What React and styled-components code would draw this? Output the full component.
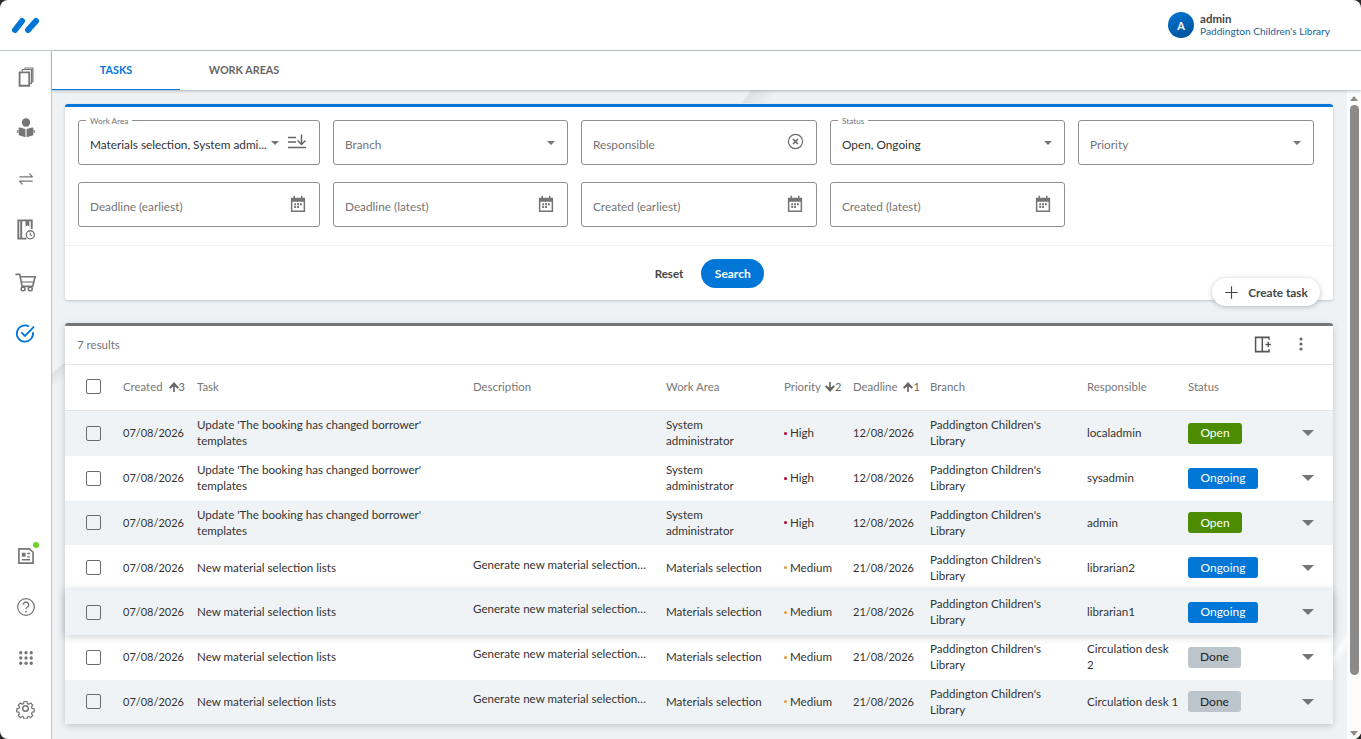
import React from 'react';
import styled, { createGlobalStyle } from 'styled-components';

const Global = createGlobalStyle`
  html, body { margin: 0; padding: 0; background: #2a2a2a; }
  body { font-family: "Lato", "Liberation Sans", sans-serif; font-size: 12px; color: #333; }
  * { box-sizing: border-box; }
  svg { flex: none; }
`;

const Page = styled.div`
  width: 1361px;
  height: 739px;
  background: #fff;
  border-radius: 8px;
  overflow: hidden;
  display: flex;
  flex-direction: column;
`;
const Header = styled.header`
  height: 51px;
  flex: none;
  display: flex;
  align-items: center;
  justify-content: space-between;
  padding: 0 31px 0 12px;
  border-bottom: 1px solid #bcc4cc;
`;
const User = styled.div`
  display: flex;
  align-items: center;
  gap: 6px;
`;
const Avatar = styled.div`
  width: 26px;
  height: 26px;
  border-radius: 50%;
  background: linear-gradient(160deg, #0076d6, #004f94);
  color: #fff;
  font-weight: 700;
  font-size: 11px;
  display: flex;
  align-items: center;
  justify-content: center;
`;
const UserName = styled.div`
  font-size: 11.5px;
  font-weight: 700;
  line-height: 12px;
  color: #444;
`;
const UserOrg = styled.div`
  font-size: 10.1px;
  line-height: 12px;
  color: #1c5f99;
`;
const Body = styled.div`
  flex: 1;
  display: flex;
  min-height: 0;
`;
const Sidebar = styled.nav`
  width: 52px;
  flex: none;
  border-right: 1px solid #bcc4cc;
  display: flex;
  flex-direction: column;
  justify-content: space-between;
  padding-bottom: 5px;
`;
const SideGroup = styled.div`
  display: flex;
  flex-direction: column;
`;
const SideItem = styled.div`
  position: relative;
  height: 51px;
  display: flex;
  align-items: center;
  justify-content: center;
  padding-top: ${p => p.$nudge || 0}px;
  color: ${p => (p.$active ? '#0076d6' : '#757575')};
`;
const Dot = styled.span`
  position: absolute;
  top: 12px;
  right: 12px;
  width: 6px;
  height: 6px;
  border-radius: 50%;
  background: #6fd420;
`;
const Main = styled.main`
  flex: 1;
  min-width: 0;
  display: flex;
  flex-direction: column;
`;
const Tabs = styled.div`
  height: 39px;
  flex: none;
  display: flex;
  background: #fff;
  box-shadow: 0 1px 3px rgba(60, 70, 80, 0.35);
  position: relative;
  z-index: 2;
`;
const Tab = styled.div`
  width: 128px;
  display: flex;
  align-items: center;
  justify-content: center;
  font-size: 10.8px;
  font-weight: 700;
  padding-bottom: 1px;
  color: ${p => (p.$active ? '#0076d6' : '#666')};
  border-bottom: 1px solid ${p => (p.$active ? '#0076d6' : 'transparent')};
`;
// the faint diagonal streaks of the page background, showing in the gaps around the panels
const ScrollArea = styled.div`
  flex: 1;
  min-height: 0;
  display: flex;
  background-color: #eff2f5;
  background-repeat: no-repeat;
  background-image:
    linear-gradient(125deg, transparent 30%, #dfe2e5 36%, transparent 90%),
    linear-gradient(140deg, transparent 42%, #dfe2e5 48%, transparent 85%),
    linear-gradient(125deg, transparent 35%, #fbfcfd 50%, transparent 70%);
  background-size: 40px 13px, 13px 30px, 14px 40px;
  background-position: 683px 0, 0 265px, 1281px 540px;
`;
const Content = styled.div`
  flex: 1;
  min-width: 0;
  padding: 14px 14px 0 13px;
  display: flex;
  flex-direction: column;
  gap: 23px;
`;
const Scrollbar = styled.div`
  width: 14px;
  flex: none;
  background: #fcfcfc;
  display: flex;
  flex-direction: column;
  align-items: center;
  justify-content: space-between;
  padding: 6px 0 3px;
`;
const ScrollThumb = styled.div`
  width: 9px;
  height: 570px;
  margin-top: 4px;
  border-radius: 5px;
  background: #8b8b8b;
`;
const ScrollSpacer = styled.div`
  flex: 1;
`;
const ScrollArrow = styled.div`
  width: 0;
  height: 0;
  border-left: 4px solid transparent;
  border-right: 4px solid transparent;
  ${p => (p.$down ? 'border-top: 5px solid #8b8b8b;' : 'border-bottom: 5px solid #8b8b8b;')}
`;
const SearchPanel = styled.section`
  position: relative;
  height: 196px;
  flex: none;
  background: #fff;
  border-top: 3px solid #0076d6;
  border-radius: 3px;
  box-shadow: 0 1px 3px rgba(60, 70, 80, 0.25);
`;
const FilterGrid = styled.div`
  display: grid;
  grid-template-columns: 242px 235px 236px 235px 236px;
  grid-auto-rows: 45px;
  gap: 17px 13px;
  padding: 13px 13px 18px;
  border-bottom: 1px solid #eff1f3;
`;
const Field = styled.div`
  position: relative;
  border: 1px solid #8f8f8f;
  border-radius: 3px;
  display: flex;
  align-items: center;
  padding: 0 12px 0 11px;
  gap: 8px;
`;
const Legend = styled.span`
  position: absolute;
  top: -5px;
  left: 7px;
  padding: 0 4px;
  background: #fff;
  font-size: 8.2px;
  line-height: 10px;
  color: #757575;
`;
const FieldText = styled.span`
  flex: 1;
  min-width: 0;
  padding-top: 3px;
  font-size: 11.8px;
  white-space: nowrap;
  color: ${p => (p.$value ? '#333' : '#757575')};
`;
const Caret = styled.span`
  width: 0;
  height: 0;
  flex: none;
  border-left: 4px solid transparent;
  border-right: 4px solid transparent;
  border-top: 4px solid #757575;
`;
const Actions = styled.div`
  display: flex;
  justify-content: center;
  align-items: center;
  gap: 18px;
  padding-top: 13px;
  padding-left: 21px;
`;
const ResetButton = styled.button`
  border: 0;
  background: none;
  padding: 0;
  font: 700 11.5px "Lato", sans-serif;
  color: #444;
`;
const SearchButton = styled.button`
  width: 63px;
  height: 29px;
  border: 0;
  border-radius: 15px;
  background: #0076d6;
  color: #fff;
  font: 700 12px "Lato", sans-serif;
`;
const CreateButton = styled.button`
  position: absolute;
  right: 13px;
  bottom: -6px;
  width: 108px;
  height: 28px;
  border: 0;
  border-radius: 14px;
  background: #fff;
  box-shadow: 0 1px 5px rgba(40, 50, 60, 0.3);
  display: flex;
  align-items: center;
  justify-content: center;
  gap: 9px;
  font: 700 11.8px "Lato", sans-serif;
  color: #444;
  z-index: 1;
`;
const ResultPanel = styled.section`
  flex: none;
  background: #fff;
  border-top: 3px solid #757575;
  border-radius: 3px;
  box-shadow: 0 2px 6px rgba(60, 70, 80, 0.25);
`;
const Toolbar = styled.div`
  height: 39px;
  display: flex;
  align-items: center;
  justify-content: space-between;
  padding: 0 24px 2px 12px;
  border-bottom: 1px solid #e2e5e8;
  color: #757575;
  font-size: 11.5px;
`;
const ToolIcons = styled.div`
  display: flex;
  align-items: center;
  gap: 20px;
`;
const columns = '58px 74px 276px 193px 118px 69px 77px 157px 101px 114px 31px';
const HeadRow = styled.div`
  display: grid;
  grid-template-columns: ${columns};
  height: 46px;
  padding-bottom: 2px;
  align-items: center;
  border-bottom: 1px solid #e2e5e8;
  color: #777;
  font-size: 11.4px;
`;
const Row = styled.div`
  position: relative;
  display: grid;
  grid-template-columns: ${columns};
  height: 44.75px;
  align-items: center;
  line-height: 16px;
  font-size: 11.6px;
  color: #333;
  background: ${p => (p.$shaded ? '#f0f3f6' : '#fff')};
  ${p => p.$raised && 'z-index: 1; box-shadow: 0 1px 8px rgba(40, 50, 60, 0.28);'}
`;
const CheckCell = styled.div`
  padding-left: 21px;
  display: flex;
`;
const Check = styled.span`
  width: 15px;
  height: 15px;
  border: 1.5px solid #6b6b6b;
  border-radius: 2px;
`;
const SortCell = styled.div`
  display: flex;
  align-items: center;
  gap: ${p => p.$gap || 5}px;
  white-space: nowrap;
`;
const Sort = styled.span`
  display: inline-flex;
  align-items: center;
  font-size: 11px;
  color: #666;
`;
const DateCell = styled.div`
  font-size: 11px;
`;
const WrapCell = styled.div`
  padding-right: 12px;
`;
const ResponsibleCell = styled.div`
  white-space: pre-line;
`;
const Description = styled.div`
  white-space: nowrap;
  overflow: hidden;
  text-overflow: ellipsis;
  padding-right: 19px;
  margin-top: -6px;
`;
const PriorityCell = styled.div`
  display: flex;
  align-items: center;
  gap: 3px;
`;
const PriorityDot = styled.span`
  width: 3px;
  height: 3px;
  border-radius: 50%;
  background: ${p => p.$color};
`;
const Badge = styled.span`
  display: inline-flex;
  align-items: center;
  justify-content: center;
  height: 21px;
  width: ${p => p.$w}px;
  border-radius: 3px;
  font-size: 12px;
  color: ${p => p.$fg};
  background: ${p => p.$bg};
`;
const ExpandCell = styled.div`
  display: flex;
`;
const Expand = styled.span`
  width: 0;
  height: 0;
  border-left: 6px solid transparent;
  border-right: 6px solid transparent;
  border-top: 6px solid #757575;
`;

const Svg = ({ size = 20, children, ...rest }) => (
  <svg width={size} height={size} viewBox="0 0 24 24" fill="none" stroke="currentColor" strokeWidth="1.8" {...rest}>
    {children}
  </svg>
);
const RaisedSvg = styled(Svg)`
  margin-top: -2px;
`;

const Logo = () => (
  <svg width="28" height="16" viewBox="0 0 28 16">
    <g stroke="#0076d6" strokeWidth="6" strokeLinecap="round">
      <line x1="3" y1="13" x2="10" y2="4" />
      <line x1="16" y1="13" x2="24" y2="4" />
    </g>
  </svg>
);
const Books = () => (
  <Svg size={22}>
    <path d="M5 7h10.5v14.5H5z" strokeWidth="2" />
    <path d="M8 6V3.8h10V19h-2M11 3.5V2.2h8.5V17h-1.5" strokeWidth="1.3" />
  </Svg>
);
const Reader = () => (
  <Svg size={22} stroke="none" fill="currentColor">
    <circle cx="12" cy="6" r="4.6" />
    <path d="M4 12.5q0-1.5 1.5-1L11.4 13v9.2L5 20.2q-1-.3-1-1.5zM20 12.5q0-1.5-1.5-1L12.6 13v9.2l6.4-2q1-.3 1-1.5z" />
    <path d="M2.4 14.2h1.2v3.2H2.4zM20.4 14.2h1.2v3.2h-1.2z" />
  </Svg>
);
const Swap = () => (
  <Svg size={20} strokeWidth="1.5">
    <path d="M4 9.5h16M16 5.5l4 4M20 14.5H4M8 18.5l-4-4" />
  </Svg>
);
const BookClock = () => (
  <Svg size={23}>
    <path d="M13 21.5H4.5v-19h14v9" strokeWidth="2" />
    <path d="M7.5 3v18.5" strokeWidth="2" />
    <path d="M12 3v6l2-1.5L16 9V3z" fill="currentColor" stroke="none" />
    <circle cx="17" cy="17.5" r="4.2" strokeWidth="1.4" />
    <path d="M17 15.2v2.4l1.6 1" strokeWidth="1.2" />
  </Svg>
);
const Cart = () => (
  <Svg size={23} strokeWidth="1.7">
    <path d="M1.5 3.5H6l2.5 12.5h11L22 6H6.7" />
    <path d="M7.5 11.5h13" strokeWidth="1.2" />
    <rect x="7.5" y="17" width="4" height="3.6" rx="1.6" />
    <rect x="15" y="17" width="4" height="3.6" rx="1.6" />
  </Svg>
);
const CheckCircle = () => (
  <Svg size={21} strokeWidth="2">
    <path d="M20.5 10.5A9.3 9.3 0 1 1 16 4" />
    <path d="M7.8 11.2l3.6 3.6 9.8-10.2" strokeLinecap="round" />
  </Svg>
);
const News = () => (
  <Svg size={20} strokeWidth="2">
    <path d="M3.5 3.5H16l4.5 4V20.5h-17z" />
    <path d="M7 8h4.5v5H7z" fill="currentColor" stroke="none" />
    <path d="M13.5 9h3.5M13.5 13h3.5M7 16.5h10" strokeWidth="1.7" />
  </Svg>
);
const Help = () => (
  <Svg size={20} strokeWidth="1.5">
    <circle cx="12" cy="12" r="10" />
    <path d="M8.8 9.3a3.2 3.2 0 1 1 4.9 2.7c-1.1.7-1.7 1.3-1.7 2.6" strokeWidth="1.7" />
    <circle cx="12" cy="17.6" r="1" fill="currentColor" stroke="none" />
  </Svg>
);
const Apps = () => (
  <Svg size={14} stroke="none" fill="currentColor">
    {[3, 12, 21].map(y => [3, 12, 21].map(x => <circle key={`${x}-${y}`} cx={x} cy={y} r="2.8" />))}
  </Svg>
);
const Gear = () => (
  <Svg size={21} strokeWidth="1.7">
    <circle cx="12" cy="12" r="3.2" />
    <path d="M10 2.5h4l.6 2.9 1.9.8 2.5-1.6 2.8 2.9-1.6 2.4.8 2 2.9.6v4l-2.9.6-.8 2 1.6 2.4-2.8 2.9-2.5-1.6-1.9.8-.6 2.9h-4l-.6-2.9-1.9-.8-2.5 1.6-2.8-2.9 1.6-2.4-.8-2-2.9-.6v-4l2.9-.6.8-2L2.2 7.4 5 4.5l2.5 1.6 1.9-.8z" transform="translate(1.9 1.9) scale(.84)" strokeLinejoin="round" />
  </Svg>
);
const SortLines = () => (
  <RaisedSvg size={20} strokeWidth="1.5" stroke="#666" viewBox="0 0 20 20">
    <path d="M1 5.5h8M1 10h8M1 15.5h18M14.5 2.5v9.5M10.5 8.5l4 4 4-4" />
  </RaisedSvg>
);
const ClearCircle = () => (
  <RaisedSvg size={17} strokeWidth="1.6" stroke="#666">
    <circle cx="12" cy="12" r="10" />
    <path d="M8.5 8.5l7 7M15.5 8.5l-7 7" strokeWidth="2.2" />
  </RaisedSvg>
);
const Calendar = () => (
  <RaisedSvg size={18} stroke="none" fill="#757575">
    <path d="M6 1h2v2.5h8V1h2v2.5h3.5v19h-19v-19H6zM4.5 9v11.5h15V9z" fillRule="evenodd" />
    <path d="M7 11h2.5v2.5H7zM10.8 11h2.5v2.5h-2.5zM14.6 11h2.5v2.5h-2.5zM7 14.8h2.5v2.5H7zM10.8 14.8h2.5v2.5h-2.5z" />
  </RaisedSvg>
);
const Plus = () => (
  <Svg size={15} strokeWidth="1.8">
    <path d="M12 2v20M2 12h20" />
  </Svg>
);
const ColumnsAdd = () => (
  <Svg size={19} strokeWidth="1.9" stroke="#555">
    <path d="M19 6V3H2v18h17v-3M10.5 3v18" />
    <path d="M18 8.5v7M14.5 12h7" strokeWidth="1.7" />
  </Svg>
);
const Dots = () => (
  <Svg size={16} stroke="none" fill="#666">
    <circle cx="12" cy="4.5" r="2.3" />
    <circle cx="12" cy="12" r="2.3" />
    <circle cx="12" cy="19.5" r="2.3" />
  </Svg>
);
const Arrow = ({ down }) => (
  <svg width="10" height="10" viewBox="0 0 12 12" fill="currentColor">
    <path d={down ? 'M5 0h2v6.5L10.5 4 12 5.5 6 12 0 5.5 1.5 4 5 6.5z' : 'M5 12h2V5.5L10.5 8 12 6.5 6 0 0 6.5 1.5 8 5 5.5z'} />
  </svg>
);

const filters = [
  { label: 'Work Area', value: 'Materials selection, System admi...', caret: true, icon: <SortLines /> },
  { text: 'Branch', caret: true },
  { text: 'Responsible', icon: <ClearCircle /> },
  { label: 'Status', value: 'Open, Ongoing', caret: true },
  { text: 'Priority', caret: true },
  { text: 'Deadline (earliest)', icon: <Calendar /> },
  { text: 'Deadline (latest)', icon: <Calendar /> },
  { text: 'Created (earliest)', icon: <Calendar /> },
  { text: 'Created (latest)', icon: <Calendar /> },
];

const OPEN = { label: 'Open', w: 54, bg: '#4c8c00', fg: '#fff' };
const ONGOING = { label: 'Ongoing', w: 70, bg: '#0076d6', fg: '#fff' };
const DONE = { label: 'Done', w: 53, bg: '#bcc4cc', fg: '#222' };
const updateTitle = "Update 'The booking has changed borrower' templates";
const newTitle = 'New material selection lists';
const generate = 'Generate new material selection lists';
const library = "Paddington Children's Library";

const rows = [
  { task: updateTitle, area: 'System administrator', pr: 'High', due: '12/08/2026', who: 'localadmin', st: OPEN, shaded: true },
  { task: updateTitle, area: 'System administrator', pr: 'High', due: '12/08/2026', who: 'sysadmin', st: ONGOING },
  { task: updateTitle, area: 'System administrator', pr: 'High', due: '12/08/2026', who: 'admin', st: OPEN, shaded: true },
  { task: newTitle, desc: generate, area: 'Materials selection', pr: 'Medium', due: '21/08/2026', who: 'librarian2', st: ONGOING },
  { task: newTitle, desc: generate, area: 'Materials selection', pr: 'Medium', due: '21/08/2026', who: 'librarian1', st: ONGOING, shaded: true, raised: true },
  { task: newTitle, desc: generate, area: 'Materials selection', pr: 'Medium', due: '21/08/2026', who: 'Circulation desk\n2', st: DONE },
  { task: newTitle, desc: generate, area: 'Materials selection', pr: 'Medium', due: '21/08/2026', who: 'Circulation desk 1', st: DONE, shaded: true },
];

export default function App() {
  return (
    <Page>
      <Global />
      <Header>
        <Logo />
        <User>
          <Avatar>A</Avatar>
          <div>
            <UserName>admin</UserName>
            <UserOrg>{library}</UserOrg>
          </div>
        </User>
      </Header>
      <Body>
        <Sidebar>
          <SideGroup>
            <SideItem><Books /></SideItem>
            <SideItem><Reader /></SideItem>
            <SideItem><Swap /></SideItem>
            <SideItem><BookClock /></SideItem>
            <SideItem $nudge={3}><Cart /></SideItem>
            <SideItem $nudge={3} $active><CheckCircle /></SideItem>
          </SideGroup>
          <SideGroup>
            <SideItem><News /><Dot /></SideItem>
            <SideItem><Help /></SideItem>
            <SideItem><Apps /></SideItem>
            <SideItem><Gear /></SideItem>
          </SideGroup>
        </Sidebar>
        <Main>
          <Tabs>
            <Tab $active>TASKS</Tab>
            <Tab>WORK AREAS</Tab>
          </Tabs>
          <ScrollArea>
            <Content>
              <SearchPanel>
                <FilterGrid>
                  {filters.map(f => (
                    <Field key={f.label || f.text}>
                      {f.label && <Legend>{f.label}</Legend>}
                      <FieldText $value={!!f.value}>{f.value || f.text}</FieldText>
                      {f.caret && <Caret />}
                      {f.icon}
                    </Field>
                  ))}
                </FilterGrid>
                <Actions>
                  <ResetButton>Reset</ResetButton>
                  <SearchButton>Search</SearchButton>
                </Actions>
                <CreateButton><Plus />Create task</CreateButton>
              </SearchPanel>
              <ResultPanel>
                <Toolbar>
                  <span>7 results</span>
                  <ToolIcons>
                    <ColumnsAdd />
                    <Dots />
                  </ToolIcons>
                </Toolbar>
                <HeadRow>
                  <CheckCell><Check /></CheckCell>
                  <SortCell $gap={6}>Created <Sort><Arrow />3</Sort></SortCell>
                  <div>Task</div>
                  <div>Description</div>
                  <div>Work Area</div>
                  <SortCell $gap={4}>Priority <Sort><Arrow down />2</Sort></SortCell>
                  <SortCell $gap={6}>Deadline <Sort><Arrow />1</Sort></SortCell>
                  <div>Branch</div>
                  <div>Responsible</div>
                  <div>Status</div>
                  <div />
                </HeadRow>
                {rows.map((r, i) => (
                  <Row key={i} $shaded={r.shaded} $raised={r.raised}>
                    <CheckCell><Check /></CheckCell>
                    <DateCell>07/08/2026</DateCell>
                    <div>{r.task}</div>
                    {r.desc ? <Description>{r.desc}</Description> : <div />}
                    <WrapCell>{r.area}</WrapCell>
                    <PriorityCell>
                      <PriorityDot $color={r.pr === 'High' ? '#b5002b' : '#e8973a'} />
                      {r.pr}
                    </PriorityCell>
                    <DateCell>{r.due}</DateCell>
                    <WrapCell>{library}</WrapCell>
                    <ResponsibleCell>{r.who}</ResponsibleCell>
                    <div>
                      <Badge $w={r.st.w} $bg={r.st.bg} $fg={r.st.fg}>{r.st.label}</Badge>
                    </div>
                    <ExpandCell><Expand /></ExpandCell>
                  </Row>
                ))}
              </ResultPanel>
            </Content>
            <Scrollbar>
              <ScrollArrow />
              <ScrollThumb />
              <ScrollSpacer />
              <ScrollArrow $down />
            </Scrollbar>
          </ScrollArea>
        </Main>
      </Body>
    </Page>
  );
}
